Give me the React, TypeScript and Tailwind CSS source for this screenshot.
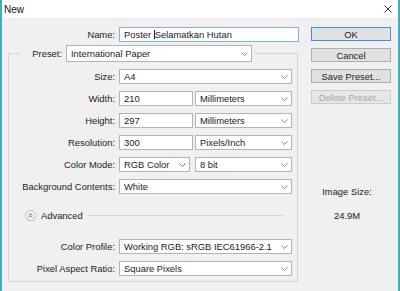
import React from "react";

function Chevron() {
  return (
    <svg width="7" height="4" viewBox="0 0 7 4" className="shrink-0">
      <polyline points="0.5,0.5 3.5,3.5 6.5,0.5" fill="none" stroke="#808080" strokeWidth="0.9" />
    </svg>
  );
}

function Select({ value, className }: { value: string; className: string }) {
  return (
    <div className={`flex h-[15px] items-center justify-between border border-[#b4b4b4] bg-white pl-[4px] pr-[3px] ${className}`}>
      <span>{value}</span>
      <Chevron />
    </div>
  );
}

function Input({ value, className }: { value: string; className: string }) {
  return (
    <div className={`flex h-[15px] items-center border border-[#b4b4b4] bg-white pl-[4px] ${className}`}>
      {value}
    </div>
  );
}

function Row({ label, children }: { label: string; children: React.ReactNode }) {
  return (
    <div className="flex items-center">
      <span className="w-[110px] pr-[4px] text-right">{label}</span>
      {children}
    </div>
  );
}

function Button({ label, variant }: { label: string; variant?: "default" | "disabled" }) {
  const style =
    variant === "default"
      ? "border-[#3f8fdc] bg-[#e1e1e1] text-[#222] shadow-[inset_0_0_0_1px_#d6e8f9]"
      : variant === "disabled"
        ? "border-[#cbcbcb] bg-[#e6e6e6] text-[#a6a6a6]"
        : "border-[#adadad] bg-[#e1e1e1] text-[#222]";
  return (
    <div className={`flex h-[14px] w-[80px] items-center justify-center border ${style}`}>{label}</div>
  );
}

export default function App() {
  return (
    <div className="flex h-[291px] w-[400px] flex-col border-x-2 border-[#3fb1bb] bg-[#f0f0f0] font-['Liberation_Sans',Arial,sans-serif] text-[9.4px] leading-[11px] text-[#222]">
      <div className="flex h-[18px] items-center justify-between bg-white pl-[2px] pr-[6px] text-[10px] text-[#111]">
        <span>New</span>
        <svg width="8" height="8" viewBox="0 0 8 8">
          <path d="M0.5 0.5L7.5 7.5M7.5 0.5L0.5 7.5" stroke="#222" strokeWidth="0.9" />
        </svg>
      </div>

      <div className="flex">
        <div className="flex w-[309px] flex-col pt-[9px]">
          <div className="flex items-center">
            <span className="w-[117px] pr-[4px] text-right">Name:</span>
            <div className="flex h-[15px] w-[180px] items-center border border-[#7eb4ea] bg-white pl-[4px]">
              Poster&nbsp;<span className="border-l border-[#222] leading-[9px]">Selamatkan</span>&nbsp;Hutan
            </div>
          </div>

          <fieldset className="ml-[6px] mt-[3px] w-[290px] border border-[#d3d3d3] pb-[5px]">
            <legend className="ml-[11px] flex items-center pr-[2px]">
              <span className="w-[46px] pr-[4px] text-right">Preset:</span>
              <Select value="International Paper" className="h-[17px] w-[186px]" />
            </legend>

            <div className="mt-[7px] flex flex-col gap-[7px]">
              <Row label="Size:">
                <Select value="A4" className="w-[173px]" />
              </Row>
              <Row label="Width:">
                <Input value="210" className="w-[74px]" />
                <Select value="Millimeters" className="ml-[2px] w-[97px]" />
              </Row>
              <Row label="Height:">
                <Input value="297" className="w-[74px]" />
                <Select value="Millimeters" className="ml-[2px] w-[97px]" />
              </Row>
              <Row label="Resolution:">
                <Input value="300" className="w-[74px]" />
                <Select value="Pixels/Inch" className="ml-[2px] w-[97px]" />
              </Row>
              <Row label="Color Mode:">
                <Select value="RGB Color" className="w-[71px]" />
                <Select value="8 bit" className="ml-[5px] w-[97px]" />
              </Row>
              <Row label="Background Contents:">
                <Select value="White" className="w-[173px]" />
              </Row>
            </div>

            <div className="mt-[16px] flex h-[11px] items-center pl-[16px] pr-[13px]">
              <div className="flex h-[11px] w-[11px] items-center justify-center rounded-full border border-[#b9b9b9] bg-[#f7f7f7]">
                <svg width="5" height="5" viewBox="0 0 5 5">
                  <path d="M0.5 2.2L2.5 0.5L4.5 2.2M0.5 4.5L2.5 2.8L4.5 4.5" fill="none" stroke="#555" strokeWidth="0.8" />
                </svg>
              </div>
              <span className="ml-[5px]">Advanced</span>
              <div className="ml-[5px] h-px flex-1 bg-[#d6d6d6]" />
            </div>

            <div className="mt-[18px] flex flex-col gap-[7px]">
              <Row label="Color Profile:">
                <Select value="Working RGB:  sRGB IEC61966-2.1" className="w-[173px]" />
              </Row>
              <Row label="Pixel Aspect Ratio:">
                <Select value="Square Pixels" className="w-[173px]" />
              </Row>
            </div>
          </fieldset>
        </div>

        <div className="flex w-[80px] flex-col pt-[9px]">
          <div className="flex flex-col gap-[7px]">
            <Button label="OK" variant="default" />
            <Button label="Cancel" />
            <Button label="Save Preset..." />
            <Button label="Delete Preset..." variant="disabled" />
          </div>
          <div className="mt-[82px] flex flex-col items-center gap-[13px] pr-[8px]">
            <span>Image Size:</span>
            <span>24.9M</span>
          </div>
        </div>
      </div>
    </div>
  );
}
